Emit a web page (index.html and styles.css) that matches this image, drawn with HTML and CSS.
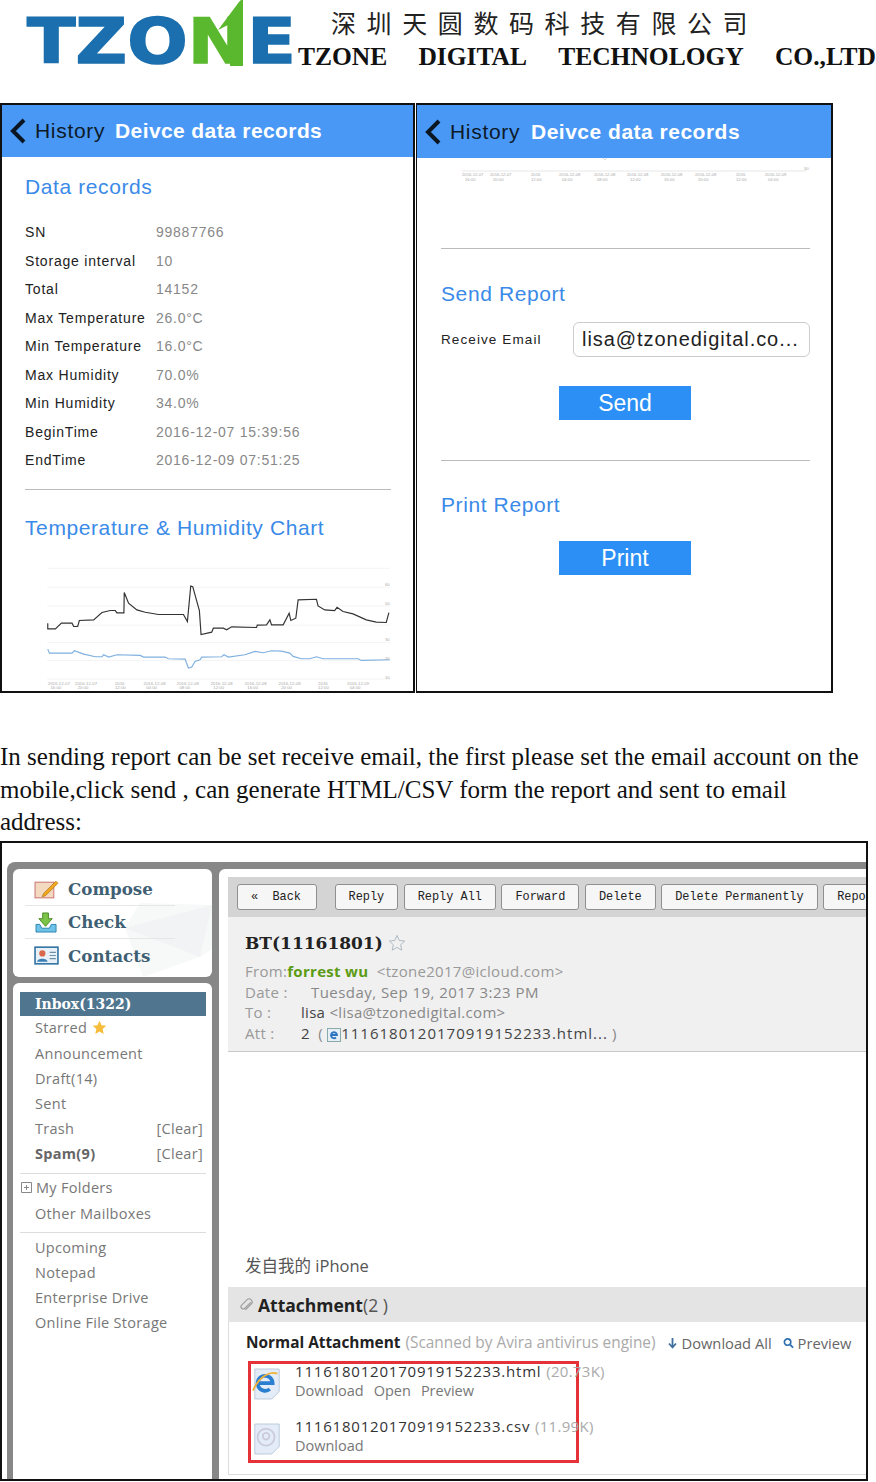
FILE: index.html
```html
<!DOCTYPE html>
<html lang="en">
<head>
<meta charset="utf-8">
<title>TZONE report</title>
<link rel="stylesheet" href="styles.css">
</head>
<body>
<header class="brand">
	<div class="logo">
		<div class="logo-word"><span>TZO</span><span class="logo-n">N</span><span>E</span></div>
		<svg class="logo-arrow" viewBox="0 0 27 66"><polygon points="0,30 21,2 23,0 25,0 25,66 12,66 12,24" fill="#5ab82e"/></svg>
	</div>
	<div class="company">
		<div class="company-cn">深圳天圆数码科技有限公司</div>
		<div class="company-en"><span>TZONE</span><span>DIGITAL</span><span>TECHNOLOGY</span><span>CO.,LTD</span></div>
	</div>
</header>

<section class="phones">
	<div class="phone phone-left">
		<div class="bar">
			<svg class="chev" viewBox="0 0 18 26"><path d="M15 2 4 13l11 11" fill="none" stroke="#0a1622" stroke-width="4"/></svg>
			<span class="bar-back">History</span><span class="bar-title">Deivce data records</span>
		</div>
		<h2 class="sec sec-data">Data records</h2>
		<div class="rows">
			<div class="row"><span>SN</span><em>99887766</em></div>
			<div class="row"><span>Storage interval</span><em>10</em></div>
			<div class="row"><span>Total</span><em>14152</em></div>
			<div class="row"><span>Max Temperature</span><em>26.0°C</em></div>
			<div class="row"><span>Min Temperature</span><em>16.0°C</em></div>
			<div class="row"><span>Max Humidity</span><em>70.0%</em></div>
			<div class="row"><span>Min Humidity</span><em>34.0%</em></div>
			<div class="row"><span>BeginTime</span><em>2016-12-07 15:39:56</em></div>
			<div class="row"><span>EndTime</span><em>2016-12-09 07:51:25</em></div>
		</div>
		<hr class="rule rule-left">
		<h2 class="sec sec-chart">Temperature &amp; Humidity Chart</h2>
		<svg class="chart" viewBox="120 240 1080 400">
			<g stroke="#eee" stroke-width="2">
				<path d="M140 265H1172M140 322H1172M140 378H1172M140 436H1172M140 488H1172M140 542H1172M140 598H1172"/>
			</g>
			<polyline fill="none" stroke="#333" stroke-width="3.500" points="142,430 142,447 165,447 183,430 215,430 220,440 232,440 237,422 280,420 305,398 330,392 345,392 350,399 371,399 372,338 385,370 410,390 435,397 475,404 550,404 562,425 572,318 578,320 598,392 603,464 635,457 640,445 670,445 680,450 695,441 770,443 772,436 800,435 810,420 815,435 850,435 868,400 873,422 888,415 895,360 950,358 955,378 975,390 1005,392 1012,382 1030,395 1060,402 1100,420 1130,427 1160,428 1168,398"/>
			<polyline fill="none" stroke="#7fb0e0" stroke-width="3.500" points="142,508 147,520 215,520 222,513 250,523 285,531 305,531 310,525 325,532 350,525 420,527 430,532 495,532 505,537 555,538 565,565 575,562 585,545 600,540 605,532 665,531 672,525 685,532 735,525 765,515 790,519 815,513 845,514 870,520 880,530 905,537 930,537 950,531 970,537 1075,537 1085,542 1170,540"/>
			<g class="tick">
				<text x="1156" y="319">60</text><text x="1156" y="375">50</text><text x="1156" y="484">30</text><text x="1156" y="542">20</text><text x="1156" y="598">10</text>
				<text x="142" y="616">2016-12-07</text><text x="150" y="629">16:00</text>
				<text x="224" y="616">2016-12-07</text><text x="232" y="629">20:00</text>
				<text x="344" y="616">2016</text><text x="344" y="629">12:00</text>
				<text x="430" y="616">2016-12-08</text><text x="438" y="629">04:00</text>
				<text x="530" y="616">2016-12-08</text><text x="538" y="629">08:00</text>
				<text x="632" y="616">2016-12-08</text><text x="640" y="629">12:00</text>
				<text x="734" y="616">2016-12-08</text><text x="742" y="629">16:00</text>
				<text x="836" y="616">2016-12-08</text><text x="844" y="629">20:00</text>
				<text x="955" y="616">2016</text><text x="955" y="629">12:00</text>
				<text x="1042" y="616">2016-12-09</text><text x="1050" y="629">04:00</text>
			</g>
		</svg>
	</div>

	<div class="phone phone-right">
		<div class="bar">
			<svg class="chev" viewBox="0 0 18 26"><path d="M15 2 4 13l11 11" fill="none" stroke="#0a1622" stroke-width="4"/></svg>
			<span class="bar-back">History</span><span class="bar-title">Deivce data records</span>
		</div>
		<svg class="mini-axis" viewBox="417 158 414 32">
			<path d="M462 171H806" stroke="#ddd" stroke-width=".7"/>
			<path d="M603 158l2 2 2-2" stroke="#ccc" fill="none" stroke-width=".7"/>
			<g class="tick-small">
				<text x="804" y="170">50</text>
				<text x="462" y="176">2016-12-07</text><text x="465" y="181">16:00</text>
				<text x="490" y="176">2016-12-07</text><text x="493" y="181">20:00</text>
				<text x="531" y="176">2016</text><text x="531" y="181">12:00</text>
				<text x="559" y="176">2016-12-08</text><text x="562" y="181">04:00</text>
				<text x="594" y="176">2016-12-08</text><text x="597" y="181">08:00</text>
				<text x="627" y="176">2016-12-08</text><text x="630" y="181">12:00</text>
				<text x="661" y="176">2016-12-08</text><text x="664" y="181">16:00</text>
				<text x="695" y="176">2016-12-08</text><text x="698" y="181">20:00</text>
				<text x="736" y="176">2016</text><text x="736" y="181">12:00</text>
				<text x="765" y="176">2016-12-09</text><text x="768" y="181">04:00</text>
			</g>
		</svg>
		<hr class="rule rule-right rule-a">
		<h2 class="sec sec-send">Send Report</h2>
		<div class="mail-field">
			<label>Receive Email</label>
			<div class="mail-input">lisa@tzonedigital.co...</div>
		</div>
		<div class="btn btn-send">Send</div>
		<hr class="rule rule-right rule-b">
		<h2 class="sec sec-print">Print Report</h2>
		<div class="btn btn-print">Print</div>
	</div>
</section>

<p class="note">In sending report can be set receive email, the first please set the email account on the mobile,click send , can generate HTML/CSV form the report and sent to email address:</p>

<section class="shot">
	<div class="frame">
		<aside class="side">
			<div class="card quick">
				<svg class="envelope" viewBox="0 0 199 108"><polygon points="112,59 127,34 199,36 199,80 187,88 130,108" fill="#f7f8f8"/><polygon points="112,59 199,36 187,88" fill="#f2f3f4"/></svg>
				<div class="quick-row"><svg viewBox="0 0 24 20"><rect x="1" y="3" width="18" height="15" fill="#f3d9c0" stroke="#c77" /><path d="M9 14 21 2l2 2-12 12-3 1z" fill="#f2a81d" stroke="#a8660a" stroke-width=".6"/></svg>Compose</div>
				<div class="quick-row"><svg viewBox="0 0 24 22"><path d="M8 1h6v6h4l-7 8-7-8h4z" fill="#7cc34a" stroke="#4a8a22"/><path d="M1 13h4l2 4h8l2-4h5v8H1z" fill="#6fc3e8" stroke="#2a83ad"/></svg>Check</div>
				<div class="quick-row"><svg viewBox="0 0 24 20"><rect x="1" y="2" width="22" height="16" fill="#e8f1f8" stroke="#2f6f9f" stroke-width="1.500"/><circle cx="8" cy="8" r="3" fill="#d9694a"/><path d="M3 16c0-4 10-4 10 0z" fill="#3a7fb5"/><path d="M15 7h6M15 10h6M15 13h6" stroke="#6a8fa8"/></svg>Contacts</div>
			</div>
			<div class="card folders">
				<div class="inbox">Inbox(1322)</div>
				<div class="item">Starred <svg class="star-on" viewBox="0 0 20 20"><polygon points="10,1 12.700,7 19,7.600 14.200,12 15.600,18.600 10,15.200 4.400,18.600 5.800,12 1,7.600 7.300,7" fill="#f6bd3c"/></svg></div>
				<div class="item">Announcement</div>
				<div class="item">Draft(14)</div>
				<div class="item">Sent</div>
				<div class="item item-split"><span>Trash</span><span>[Clear]</span></div>
				<div class="item item-split"><b>Spam(9)</b><span>[Clear]</span></div>
				<div class="sep"></div>
				<div class="item"><svg class="plus" viewBox="0 0 11 11"><path d="M.5.5h10v10H.5zM3 5.500h5M5.500 3v5" fill="none" stroke="#888"/></svg>My Folders</div>
				<div class="item">Other Mailboxes</div>
				<div class="sep"></div>
				<div class="item">Upcoming</div>
				<div class="item">Notepad</div>
				<div class="item">Enterprise Drive</div>
				<div class="item">Online File Storage</div>
			</div>
		</aside>
		<main class="pane">
			<div class="toolbar">
				<span class="tb tb-back">«&nbsp;&nbsp;Back</span><span class="tb-sep"></span>
				<span class="tb">Reply</span><span class="tb">Reply All</span><span class="tb">Forward</span><span class="tb">Delete</span><span class="tb">Delete Permanently</span><span class="tb">Report</span>
			</div>
			<div class="head">
				<h1 class="subject">BT(11161801) <svg class="star" viewBox="0 0 20 20"><polygon points="10,1.500 12.500,7.200 18.600,7.800 14,12 15.300,18 10,14.900 4.700,18 6,12 1.400,7.800 7.500,7.200" fill="none" stroke="#a9b4bc"/></svg></h1>
				<div class="meta"><span>From:</span><b class="who">forrest wu</b> &nbsp;&lt;tzone2017@icloud.com&gt;</div>
				<div class="meta"><span class="key">Date :</span><span class="val val-date">Tuesday, Sep 19, 2017 3:23 PM</span></div>
				<div class="meta"><span class="key">To :</span><span class="val"><i class="dark">lisa</i> &lt;lisa@tzonedigital.com&gt;</span></div>
				<div class="meta"><span class="key">Att :</span><span class="val"><i class="dark">2</i> &nbsp;( <svg class="ie-mini" viewBox="0 0 14 14"><rect x=".5" y=".5" width="13" height="13" fill="#e6eef6" stroke="#8aa"/><path d="M4 7h6a3 3 0 1 0-1 2.500" fill="none" stroke="#2a74c0" stroke-width="1.800"/></svg><i class="dark att-file">1116180120170919152233.html...</i> )</span></div>
			</div>
			<div class="body-line">发自我的 iPhone</div>
			<div class="att-bar"><svg class="clip" viewBox="0 0 14 14"><path d="M11 5 5.500 10.500a2 2 0 0 1-3-3L8 2a3 3 0 0 1 4 4l-6 6" fill="none" stroke="#999"/></svg><b>Attachment</b><span>(2 )</span></div>
			<div class="att-body">
				<div class="att-head">
					<b>Normal Attachment</b><span class="scan">(Scanned by Avira antivirus engine)</span>
					<span class="att-act"><svg viewBox="0 0 10 12"><path d="M5 1v9M1.500 6.500 5 10.500l3.500-4" fill="none" stroke="#3f6f9f" stroke-width="1.800"/></svg>Download All</span>
					<span class="att-act"><svg viewBox="0 0 12 12"><circle cx="5" cy="5" r="3.500" fill="none" stroke="#2f6fb0" stroke-width="1.800"/><path d="m8 8 3 3" stroke="#2f6fb0" stroke-width="2"/></svg>Preview</span>
				</div>
				<div class="att-box">
					<div class="file">
						<svg class="file-ico" viewBox="0 0 32 34"><path d="M3 1h26v24l-8 8H3z" fill="#e4edf7" stroke="#b9c8da"/><path d="M7 16h15a8 8 0 1 0-3 6.500" fill="none" stroke="#2b7fd0" stroke-width="4"/><path d="M1 24C8 8 20 3 27 6" fill="none" stroke="#eeb23c" stroke-width="2"/></svg>
						<div class="file-txt">
							<div class="file-name">1116180120170919152233.html <span>(20.73K)</span></div>
							<div class="file-acts"><span>Download</span><span>Open</span><span>Preview</span></div>
						</div>
					</div>
					<div class="file">
						<svg class="file-ico" viewBox="0 0 32 34"><path d="M3 1h26v24l-8 8H3z" fill="#e4edf7" stroke="#b9c8da"/><circle cx="15" cy="15" r="9" fill="none" stroke="#ccd" stroke-width="2"/><circle cx="15" cy="14" r="3.500" fill="none" stroke="#ccd" stroke-width="2"/></svg>
						<div class="file-txt">
							<div class="file-name">1116180120170919152233.csv <span>(11.99K)</span></div>
							<div class="file-acts"><span>Download</span></div>
						</div>
					</div>
				</div>
			</div>
		</main>
	</div>
</section>
</body>
</html>
```

FILE: styles.css
```css
html, body {margin:0; padding:0; background:#fff;}
body {width:876px; height:1482px; overflow:hidden; font-family:"Liberation Sans",sans-serif; color:#222;}
h1, h2, p {margin:0; font-weight:normal;}

/* brand */
.brand {display:flex; height:103px;}
.logo {position:relative; width:298px; flex:none; padding:7px 0 0 27px; box-sizing:border-box;}
.logo-word {font:bold 63px/70px "DejaVu Sans",sans-serif; color:#1b6fae; white-space:nowrap; transform:scaleX(1.13); transform-origin:left center; -webkit-text-stroke:1.5px currentColor;}
.logo-n {color:#5ab82e;}
.logo-arrow {position:absolute; left:218px; top:0; width:27px; height:66px;}
.company {flex:1; min-width:0; white-space:nowrap;}
.company-cn {font:25px/30px "Noto Sans CJK SC",serif; letter-spacing:10.600px; margin:7px 0 0 33px;}
.company-en {display:flex; justify-content:space-between; font:bold 25.500px/30px "Liberation Serif",serif; margin-top:5px; color:#111;}

/* phones */
.phones {display:flex; height:590px; gap:1px;}
.phone {border:2px solid #111; box-sizing:border-box; height:590px; overflow:hidden;}
.phone-left {width:415px;}
.phone-right {width:417px; border-left-width:1px;}
.bar {display:flex; align-items:center; height:52px; background:#4a98f5; padding-left:7px; font-size:21px;}
.phone-right .bar {height:53px;}
.chev {width:18px; height:26px; margin-right:8px;}
.bar-back {color:#0d1a28; width:80px; letter-spacing:.7px;}
.phone-right .bar-back {width:81px;}
.bar-title {color:#fff; font-weight:bold; letter-spacing:.4px;}
.phone-right .bar-title {letter-spacing:.5px;}
.sec {color:#3a8ae8; font-size:21px; line-height:26px; letter-spacing:.6px; padding-left:23px;}
.phone-right .sec {padding-left:24px;}
.sec-data {margin-top:17px;}
.rows {margin:18px 0 0 23px;}
.row {display:flex; height:28.500px; align-items:center; font-size:14px; letter-spacing:.8px;}
.row span {width:131px; flex:none; white-space:nowrap;}
.row em {font-style:normal; color:#888; letter-spacing:.75px;}
.rule {border:0; border-top:1px solid #bbb; margin:0;}
.rule-left {margin:14px 22px 0 23px;}
.sec-chart {margin-top:25px;}
.chart {display:block; width:360px; height:133px; margin:19px 0 0 38px;}
.tick text {font-size:13px; fill:#aaa;}
.tick-small text {font-size:4.200px; fill:#aaa;}
.mini-axis {display:block; width:414px; height:32px;}
.rule-right {margin-left:24px; margin-right:21px;}
.rule-a {margin-top:58px;}
.sec-send {margin-top:32px;}
.mail-field {display:flex; align-items:center; margin:15px 21px 0 24px;}
.mail-field label {width:132px; font-size:13.500px; letter-spacing:1.100px; white-space:nowrap;}
.mail-input {flex:1; height:35px; box-sizing:border-box; border:1px solid #ccc; border-radius:6px; font-size:20px; line-height:32px; padding-left:8px; letter-spacing:.95px; white-space:nowrap; overflow:hidden;}
.btn {width:132px; height:34px; margin-left:142px; background:#2b8ff5; color:#fff; font-size:23px; line-height:34px; text-align:center;}
.btn-send {margin-top:29px;}
.rule-b {margin-top:40px;}
.sec-print {margin-top:31px;}
.btn-print {margin-top:23px;}

/* note */
.note {font:25px/32.500px "Liberation Serif",serif; color:#111; width:866px; padding-top:48px; height:101px; margin:0;}

/* mail screenshot */
.shot {width:868px; height:640px; box-sizing:border-box; border:2px solid #111; padding:19px 0 0 5px; overflow:hidden; position:relative; top:-1px;}
.frame {display:flex; gap:7px; height:640px; background:#878787; border-radius:8px 0 0 0; padding:7px 0 0 6px; box-sizing:border-box;}
.side {width:199px; flex:none; display:flex; flex-direction:column; gap:6px;}
.card {background:#fff; border-radius:6px;}
.quick {height:108px; position:relative; overflow:hidden; padding-top:4px; box-sizing:border-box;}
.envelope {position:absolute; left:0; top:0; width:199px; height:108px;}
.quick-row {position:relative; display:flex; align-items:center; gap:9px; height:33px; box-sizing:border-box; margin:0 12px; padding-left:9px; font:bold 16.700px "DejaVu Serif",serif; color:#3f6073; border-bottom:1px solid #e6e6e6; width:150px; white-space:nowrap;}
.quick-row:last-child {border:0;}
.quick-row svg {width:25px; height:21px; flex:none;}
.folders {flex:1; padding:9px 6px 0 7px;}
.inbox {height:24px; margin-bottom:-.7px; background:#4f758f; color:#fff; font:bold 14px/24px "DejaVu Serif",serif; padding-left:15px;}
.item {display:flex; align-items:center; height:25.200px; padding-left:15px; font:14.500px "Open Sans",sans-serif; letter-spacing:.3px; color:#777; white-space:nowrap;}
.item b {color:#666;}
.item-split {justify-content:space-between; padding-right:3px;}
.star-on {width:15px; height:15px; margin-left:5px;}
.plus {width:11px; height:11px; margin:0 4px 0 -14px;}
.sep {border-top:1px solid #ddd; margin:6.700px 0 1.200px;}

.pane {flex:1; min-width:0; background:#fff; border-radius:6px 0 0 0; padding:8px 0 0 9px; overflow:hidden;}
.toolbar {display:flex; align-items:center; gap:5.500px; height:40px; background:#d4d4d4; padding-left:9px; white-space:nowrap; overflow:hidden;}
.tb {display:block; flex:none; height:26px; box-sizing:border-box; padding:0 13px; background:#f6f6f6; border:1px solid #8f8f8f; border-radius:3px; font:11.900px/25px "Liberation Mono",monospace; color:#222;}
.tb-back {width:80px;}
.tb-sep {width:1px; height:24px; background:#bbb; margin:0 3.500px 0 3px;}
.head {height:135px; background:#f0f0f0; border-bottom:1px solid #c8c8c8; box-sizing:border-box; padding:14px 0 0 17px;}
.subject {font:bold 17px/24px "DejaVu Serif",serif; color:#222; display:flex; align-items:center; gap:5px;}
.star {width:18px; height:18px;}
.meta {display:flex; align-items:center; font:15px/20.700px "Open Sans",sans-serif; letter-spacing:.3px; color:#999; white-space:pre;}
.subject + .meta {margin-top:6px;}
.who {color:#5c9b14; font-weight:bold;}
.key {width:56px; flex:none;}
.val-date {padding-left:10px; letter-spacing:.45px;}
.val {color:#888;}
.dark {font-style:normal; color:#444;}
.att-file {letter-spacing:1px;}
.ie-mini {width:14px; height:14px; vertical-align:-3px;}
.body-line {margin:204px 0 0 17px; font:16.500px/20px "Open Sans","Noto Sans CJK SC",sans-serif; color:#555; height:31px;}
.att-bar {display:flex; align-items:center; height:35px; background:#e4e4e4; padding-left:11px; font:17.500px "Open Sans",sans-serif; color:#555;}
.att-bar b {color:#222; margin-left:4px;}
.clip {width:15px; height:15px;}
.att-body {height:153px; box-sizing:border-box; padding:10px 0 0 17px; border-left:1px solid #ddd; border-bottom:1px solid #ddd;}
.att-head {display:flex; align-items:center; font:15.400px/22px "Open Sans",sans-serif; color:#aaa; white-space:nowrap;}
.att-head b {color:#222; margin-right:5px;}
.att-act {color:#666; font-size:14.700px; display:flex; align-items:center; margin-left:11px;}
.att-act svg {width:11px; height:12px; margin-right:4px;}
.att-act:first-of-type {margin-left:13px;}
.att-box {width:331px; height:102px; box-sizing:border-box; border:3px solid #e53238; margin:7px 0 0 2px; padding-left:1px;}
.file {display:flex; gap:13px; height:55px; white-space:nowrap;}
.file-ico {width:30px; height:34px; margin-top:3px; flex:none;}
.file-txt {margin-top:-3px; color:#333;}
.file-name {font:15px/20px "Open Sans",sans-serif; letter-spacing:.8px;}
.file-name span {color:#aaa; letter-spacing:.3px;}
.file-acts {display:flex; gap:10px; color:#777; font:14.500px/20px "Open Sans",sans-serif;}
```
